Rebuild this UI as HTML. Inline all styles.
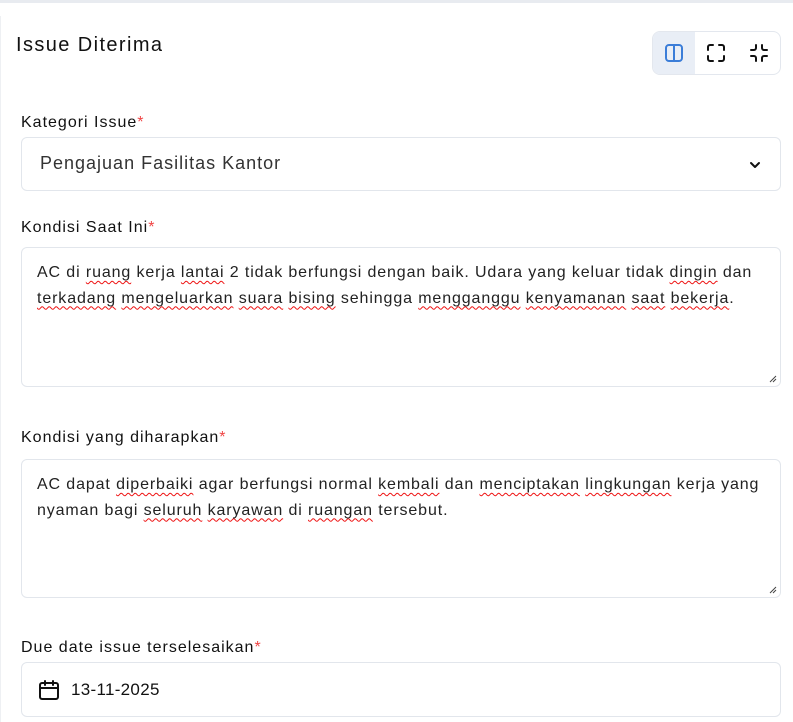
<!DOCTYPE html>
<html><head><meta charset="utf-8"><style>
*{box-sizing:border-box;margin:0;padding:0}
body{width:793px;height:722px;overflow:hidden;background:#fff;font-family:"Liberation Sans",sans-serif;color:#111827;position:relative}
.topline{position:absolute;left:0;top:0;width:793px;height:3px;background:#e8ebf0}
.leftline{position:absolute;left:0;top:16px;width:1px;height:706px;background:#eef0f3}
.title{position:absolute;left:16px;top:34px;font-size:20px;color:#111;letter-spacing:1.4px}
.tb{position:absolute;left:652px;top:31px;width:129px;height:44px;border:1px solid #e3e7ee;border-radius:8px;overflow:hidden;display:flex}
.tb div{width:43px;height:42px;display:flex;align-items:center;justify-content:center}
.tb .a{background:#e9eef6}
.lbl{position:absolute;left:21px;font-size:16px;color:#111;letter-spacing:1px}
.lbl span{color:#ef4444}
.box{position:absolute;left:21px;width:760px;border:1px solid #e2e6ec;border-radius:6px;background:#fff}
.ta{padding:12px 15px;font-size:16px;line-height:25.5px;color:#222;letter-spacing:0.88px;white-space:nowrap}
.w{text-decoration:underline wavy #e11;text-decoration-skip-ink:none;text-underline-offset:3px;text-decoration-thickness:1px}
.grip{position:absolute;right:3px;bottom:3px}
</style></head><body>
<div class="topline"></div><div class="leftline"></div>
<div class="title">Issue Diterima</div>
<div class="tb">
<div class="a"><svg width="20" height="20" viewBox="0 0 20 20" fill="none" stroke="#3b7dd8" stroke-width="2"><rect x="2" y="2" width="16" height="16" rx="3"/><line x1="10" y1="2" x2="10" y2="18"/></svg></div>
<div><svg width="20" height="20" viewBox="0 0 20 20" fill="none" stroke="#111" stroke-width="2" stroke-linecap="round"><path d="M2 7V4a2 2 0 0 1 2-2h3M13 2h3a2 2 0 0 1 2 2v3M18 13v3a2 2 0 0 1-2 2h-3M7 18H4a2 2 0 0 1-2-2v-3"/></svg></div>
<div><svg width="20" height="20" viewBox="0 0 20 20" fill="none" stroke="#111" stroke-width="2" stroke-linecap="round"><path d="M7 2v3a2 2 0 0 1-2 2H2M18 7h-3a2 2 0 0 1-2-2V2M13 18v-3a2 2 0 0 1 2-2h3M2 13h3a2 2 0 0 1 2 2v3"/></svg></div>
</div>

<div class="lbl" style="top:114px">Kategori Issue<span>*</span></div>
<div class="box" style="top:137px;height:54px">
<div style="position:absolute;left:18px;top:15px;font-size:18px;color:#333;letter-spacing:1px">Pengajuan Fasilitas Kantor</div>
<svg style="position:absolute;right:18px;top:20px" width="14" height="14" viewBox="0 0 14 14" fill="none" stroke="#111" stroke-width="2" stroke-linecap="round" stroke-linejoin="round"><path d="M3 5l4 4 4-4"/></svg>
</div>

<div class="lbl" style="top:219px">Kondisi Saat Ini<span>*</span></div>
<div class="box ta" style="top:247px;height:140px">AC di <span class="w">ruang</span> kerja <span class="w">lantai</span> 2 tidak berfungsi dengan baik. Udara yang keluar tidak <span class="w">dingin</span> dan<br><span class="w">terkadang</span> <span class="w">mengeluarkan</span> <span class="w">suara</span> <span class="w">bising</span> sehingga <span class="w">mengganggu</span> <span class="w">kenyamanan</span> <span class="w">saat</span> <span class="w">bekerja</span>.
<svg class="grip" width="8" height="8" viewBox="0 0 8 8" stroke="#444"><path d="M1 7L7 1M4 7L7 4"/></svg></div>

<div class="lbl" style="top:429px">Kondisi yang diharapkan<span>*</span></div>
<div class="box ta" style="top:459px;height:139px">AC dapat <span class="w">diperbaiki</span> agar berfungsi normal <span class="w">kembali</span> dan <span class="w">menciptakan</span> <span class="w">lingkungan</span> kerja yang<br>nyaman bagi <span class="w">seluruh</span> <span class="w">karyawan</span> di <span class="w">ruangan</span> tersebut.
<svg class="grip" width="8" height="8" viewBox="0 0 8 8" stroke="#444"><path d="M1 7L7 1M4 7L7 4"/></svg></div>

<div class="lbl" style="top:639px">Due date issue terselesaikan<span>*</span></div>
<div class="box" style="top:662px;height:55px">
<svg style="position:absolute;left:16px;top:16px" width="22" height="22" viewBox="0 0 22 22" fill="none" stroke="#111" stroke-width="2" stroke-linecap="round"><rect x="2" y="4" width="18" height="16" rx="2"/><path d="M7 2v4M15 2v4M2 9h18"/></svg>
<div style="position:absolute;left:49px;top:17px;font-size:17px;color:#111;letter-spacing:0.3px">13-11-2025</div>
</div>
</body></html>
